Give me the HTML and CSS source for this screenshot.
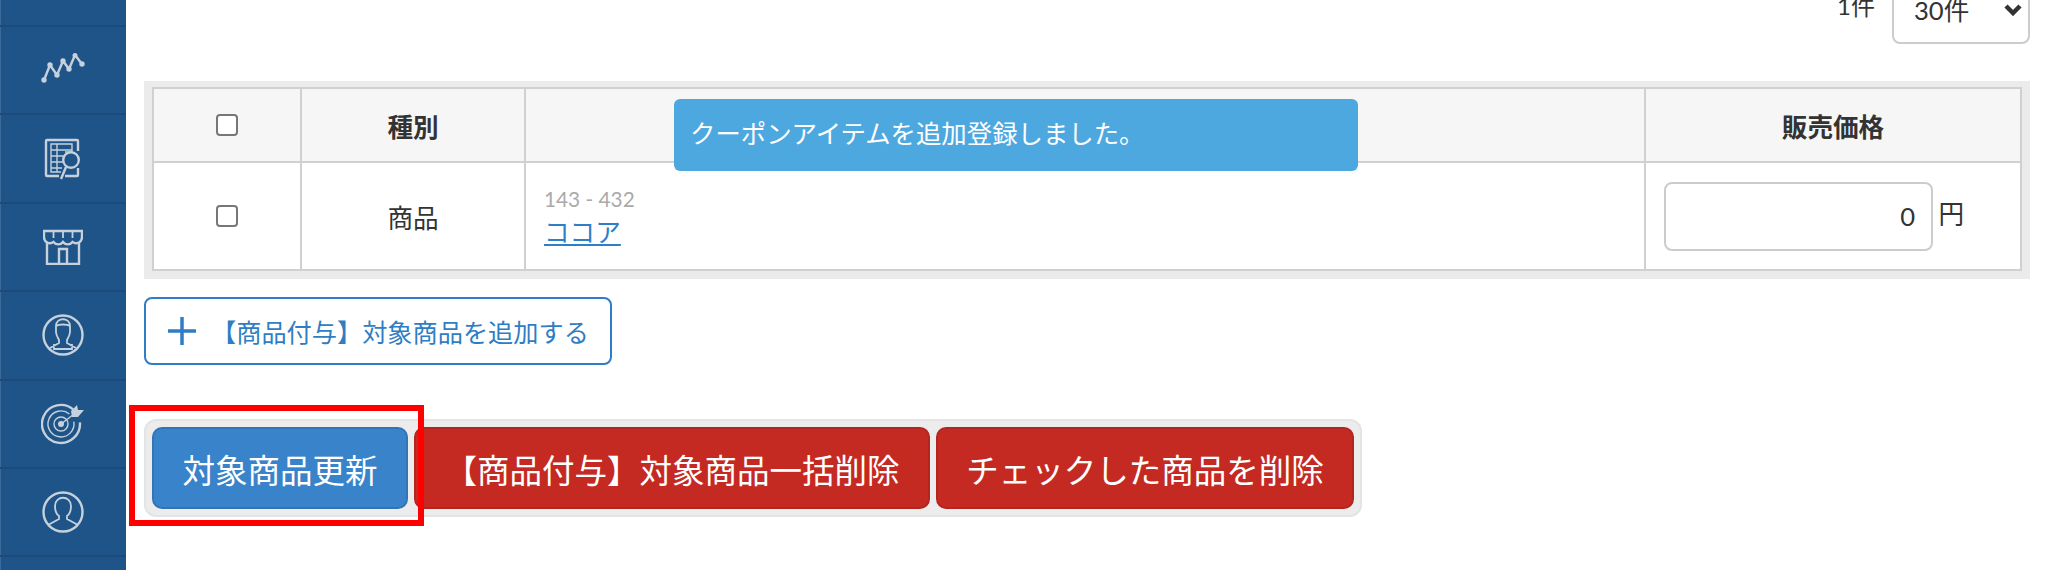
FILE: index.html
```html
<!DOCTYPE html>
<html lang="ja">
<head>
    <meta charset="UTF-8">
    <meta name="viewport" content="width=device-width, initial-scale=1.0">
    <title>クーポンアイテム</title>
    <link rel="stylesheet" href="styles.css">
</head>
<body>
    <div class="layout">
        <nav class="sidebar">
            <div class="side-item side-item-top"></div>
            <a class="side-item">
                <svg class="side-icon side-icon-chart" viewBox="0 0 44 30" width="44" height="30">
                    <path d="M3 27 L9 12 L16 22 L22 8 L28 16 L34 2 L41 11"/>
                    <circle class="dot" cx="3" cy="27" r="2.700"/><circle class="dot" cx="9" cy="12" r="2.700"/>
                    <circle class="dot" cx="16" cy="22" r="2.700"/><circle class="dot" cx="22" cy="8" r="2.700"/>
                    <circle class="dot" cx="28" cy="16" r="2.700"/><circle class="dot" cx="34" cy="2.500" r="2.500"/>
                    <circle class="dot" cx="41" cy="11" r="2.700"/>
                </svg>
            </a>
            <a class="side-item">
                <svg class="side-icon" viewBox="0 0 38 42" width="38" height="42">
                    <path d="M34 13V3a1 1 0 0 0-1-1H3a1 1 0 0 0-1 1v34a1 1 0 0 0 1 1h12M34 30v7a1 1 0 0 1-1 1H21"/>
                    <path class="thin" d="M21 14h7V6H7v28h10M7 12h21M7 18h13M7 24h12M7 30h11M13 6v28"/>
                    <circle cx="27" cy="22" r="7.800"/>
                    <path d="M22 29 L17 41"/>
                </svg>
            </a>
            <a class="side-item">
                <svg class="side-icon" viewBox="0 0 40 36" width="40" height="36">
                    <path d="M1 2h38v6a6 6 0 0 1-9.500 5 6 6 0 0 1-9.500 0 6 6 0 0 1-9.500 0A6 6 0 0 1 1 8z"/>
                    <path class="mid" d="M10.500 2v7M20 2v7M29.500 2v7"/>
                    <path d="M4 13v22h32V13M16 35V20h8v15"/>
                </svg>
            </a>
            <a class="side-item">
                <svg class="side-icon" viewBox="0 0 42 42" width="42" height="42">
                    <circle cx="21" cy="21" r="19.500"/>
                    <path class="mid" d="M14 12c0-9 14-9 14 0v6c0 3-2 6-3 8v3l9 5M14 12c3-2 11-2 14 0M14 12v6c0 3 2 6 3 8v3l-9 5M12 30v6M30 30v6M12 35h18"/>
                </svg>
            </a>
            <a class="side-item">
                <svg class="side-icon" viewBox="0 0 44 42" width="44" height="42">
                    <path d="M32.200 6.400A19 19 0 1 0 38.900 19.300"/>
                    <path class="thin" d="M28.400 11A13 13 0 1 0 32.800 18.700"/>
                    <circle class="thin" cx="20" cy="21" r="7"/>
                    <circle class="dot" cx="20" cy="21" r="3"/>
                    <path class="thin" d="M20 21 L37 8"/>
                    <path class="dot" d="M30 8l6-6 1 5 6 0-6 7-6 0z"/>
                </svg>
            </a>
            <a class="side-item">
                <svg class="side-icon" viewBox="0 0 42 42" width="42" height="42">
                    <circle cx="21" cy="21" r="19.500"/>
                    <path class="mid" d="M6 34l11-6v-3c-3-2-4-6-4-10 0-11 16-11 16 0 0 4-1 8-4 10v3l11 6"/>
                </svg>
            </a>
        </nav>

        <main class="content">
            <div class="toolbar">
                <span class="count">1件</span>
                <div class="select-box">
                    <select class="per-page">
                        <option>30件</option>
                    </select>
                    <svg class="chevron" viewBox="0 0 18 12" width="18" height="12"><path d="M2 2l7 7 7-7"/></svg>
                </div>
            </div>

            <div class="table-box">
                <table class="item-table">
                    <colgroup>
                        <col class="col-check">
                        <col class="col-kind">
                        <col>
                        <col class="col-price">
                    </colgroup>
                    <thead>
                        <tr>
                            <th><input type="checkbox" class="check"></th>
                            <th>種別</th>
                            <th></th>
                            <th>販売価格</th>
                        </tr>
                    </thead>
                    <tbody>
                        <tr>
                            <td class="center"><input type="checkbox" class="check"></td>
                            <td class="center">商品</td>
                            <td class="name-cell">
                                <div class="code">143 - 432</div>
                                <a class="item-link" href="#">ココア</a>
                            </td>
                            <td class="price-cell">
                                <input type="text" class="price-input" value="0">
                                <span class="unit">円</span>
                            </td>
                        </tr>
                    </tbody>
                </table>
            </div>

            <button class="add-btn">
                <svg class="plus" viewBox="0 0 30 30" width="30" height="30"><path d="M15 1v28M1 15h28"/></svg>
                <span>【商品付与】対象商品を追加する</span>
            </button>

            <div class="actions">
                <button class="btn btn-blue">対象商品更新</button>
                <button class="btn btn-red btn-wide">【商品付与】対象商品一括削除</button>
                <button class="btn btn-red btn-check">チェックした商品を削除</button>
                <div class="highlight"></div>
            </div>

            <div class="toast">クーポンアイテムを追加登録しました。</div>
        </main>
    </div>
</body>
</html>
```

FILE: styles.css
```css
body {
    margin: 0;
    height: 570px;
    overflow: hidden;
    background-color: #fff;
    color: #333;
    font-family: Lato, "Noto Sans CJK JP", sans-serif;
    font-size: 25.6px;
}
.layout {
    display: flex;
    height: 570px;
}

/* sidebar */
.sidebar {
    width: 126px;
    flex-shrink: 0;
    background-color: #1f5488;
    box-shadow: inset 1px 0 0 #3a6a9a;
    overflow: hidden;
}
.side-item {
    display: flex;
    align-items: center;
    justify-content: center;
    box-sizing: border-box;
    height: 88.4px;
    border-bottom: 2px solid #1b4a7b;
}
.side-item-top {
    height: 27px;
}
.side-icon {
    fill: none;
    stroke: #c6d1dc;
    stroke-width: 2.4;
}
.side-icon-chart {
    margin-bottom: 4px;
}
.side-icon .mid {
    stroke-width: 1.8;
}
.side-icon .thin {
    stroke-width: 1.4;
}
.side-icon .dot {
    fill: #c6d1dc;
    stroke: none;
}

/* main area */
.content {
    position: relative;
    flex: 1;
    padding: 0 18px;
}
.toolbar {
    display: flex;
    justify-content: flex-end;
    align-items: flex-start;
    gap: 17px;
    height: 44px;
}
.count {
    margin-top: -13px;
    font-size: 24px;
}
.select-box {
    position: relative;
    margin-top: -24px;
}
.per-page {
    display: block;
    box-sizing: border-box;
    width: 138px;
    height: 68px;
    padding: 0 20px;
    border: 2px solid #ccc;
    border-radius: 8px;
    background-color: #fff;
    color: #333;
    font-family: inherit;
    font-size: 25.6px;
    appearance: none;
}
.chevron {
    position: absolute;
    top: 28px;
    right: 8px;
    fill: none;
    stroke: #333;
    stroke-width: 4.5;
}

/* table */
.table-box {
    box-sizing: border-box;
    height: 198px;
    margin-top: 37px;
    padding: 6px 8px 8px;
    background-color: #ebebeb;
}
.item-table {
    width: 100%;
    height: 184px;
    border-collapse: collapse;
    table-layout: fixed;
    background-color: #fff;
}
.col-check {
    width: 148px;
}
.col-kind {
    width: 224px;
}
.col-price {
    width: 376px;
}
.item-table th,
.item-table td {
    padding: 0;
    border: 2px solid #d0d0d0;
}
.item-table th {
    height: 72px;
    background-color: #f6f6f6;
    font-weight: 700;
    text-align: center;
}
.center {
    text-align: center;
}
.check {
    display: block;
    box-sizing: border-box;
    width: 22px;
    height: 22px;
    margin: 0 auto;
    border: 2px solid #777;
    border-radius: 4px;
    background-color: #fff;
    appearance: none;
}
.item-table .name-cell {
    padding: 3px 0 0 18px;
}
.code {
    color: #aaa;
    font-size: 20.8px;
    line-height: 28px;
}
.item-link {
    color: #2f7fc8;
    line-height: 38px;
}
.item-table .price-cell {
    padding-left: 18px;
}
.price-input {
    box-sizing: border-box;
    width: 269px;
    height: 69px;
    padding: 0 16px;
    border: 2px solid #ccc;
    border-radius: 8px;
    color: #333;
    font-family: inherit;
    font-size: 25.6px;
    text-align: right;
    vertical-align: middle;
}
.unit {
    margin-left: -1px;
    vertical-align: -2px;
}

/* buttons */
.add-btn {
    display: flex;
    align-items: center;
    box-sizing: border-box;
    width: 468px;
    height: 68px;
    margin-top: 18px;
    padding: 0 0 0 21px;
    border: 2px solid #2f7dc4;
    border-radius: 8px;
    background-color: #fff;
    color: #2f7dc4;
    font-family: inherit;
    font-size: 25.2px;
}
.plus {
    flex-shrink: 0;
    margin-right: 14px;
    fill: none;
    stroke: #2f7dc4;
    stroke-width: 3.5;
}
.actions {
    position: relative;
    display: inline-flex;
    gap: 6px;
    margin-top: 54px;
    padding: 6px;
    border: 2px solid #e4e4e4;
    border-radius: 12px;
    background-color: #ececec;
}
.btn {
    box-sizing: border-box;
    height: 82px;
    padding: 0;
    border: 2px solid;
    border-radius: 10px;
    color: #fff;
    font-family: inherit;
    font-size: 32.5px;
}
.btn-blue {
    width: 256px;
    background-color: #3983ca;
    border-color: #3274b4;
}
.btn-red {
    background-color: #c52a22;
    border-color: #b3261f;
}
.btn-wide {
    width: 516px;
}
.btn-check {
    width: 418px;
}
.highlight {
    position: absolute;
    top: -16px;
    left: -17px;
    box-sizing: border-box;
    width: 295px;
    height: 121px;
    border: 6px solid #f00;
}
.toast {
    position: absolute;
    top: 99px;
    left: 548px;
    box-sizing: border-box;
    width: 684px;
    height: 72px;
    padding: 0 16px;
    border-radius: 6px;
    background-color: #4ea8e0;
    color: #fff;
    font-size: 25.4px;
    line-height: 68px;
}
```
